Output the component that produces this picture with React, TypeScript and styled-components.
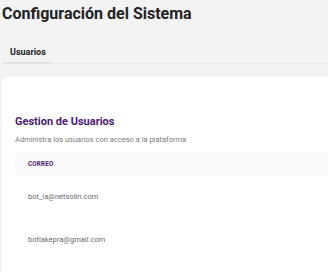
import React from 'react';
import styled, {createGlobalStyle} from 'styled-components';

const GlobalStyle = createGlobalStyle`
  html, body {
    margin: 0;
    padding: 0;
    background: #f3f3f4;
    font-family: Roboto, "Liberation Sans", sans-serif;
    overflow: hidden;
  }
`;

const Page = styled.div`
  width: 328px;
  height: 272px;
  padding: 4px 0 0 2px;
  box-sizing: border-box;
  overflow: hidden;
`;

const PageTitle = styled.h1`
  margin: 0;
  font-size: 16px;
  font-weight: 700;
  color: #222;
  line-height: 20px;
`;

const Tabs = styled.div`
  display: flex;
  margin-top: 20px;
  border-bottom: 1px solid #e9e9ee;
  margin-right: -2px;
`;

const Tab = styled.div<{active?: boolean}>`
  padding: 2px 8px 4px;
  font-size: 9px;
  font-weight: 700;
  line-height: 12px;
  color: #222;
  border-bottom: 2px solid ${p => (p.active ? '#e1e1ec' : 'transparent')};
  margin-bottom: -1px;
  width: 35px;
`;

const Card = styled.div`
  margin-top: 13px;
  margin-right: -20px;
  background: white;
  border-radius: 6px;
  padding: 38px 0 0 13px;
  height: 300px;
`;

const SectionTitle = styled.h2`
  margin: 0;
  font-size: 11px;
  font-weight: 700;
  color: #4b1a6e;
  line-height: 14px;
`;

const Subtitle = styled.p`
  margin: 6px 0 0;
  font-size: 7.5px;
  color: #7a7a7a;
  line-height: 10px;
`;

const Table = styled.div`
  margin-top: 8px;
`;

const HeaderRow = styled.div`
  display: flex;
  align-items: center;
  height: 22px;
  padding-left: 13px;
  background: #f8f9fb;
  font-size: 6.3px;
  font-weight: 700;
  color: #4b1a6e;
  letter-spacing: 0.2px;
`;

const Row = styled.div`
  display: flex;
  align-items: center;
  height: 43px;
  padding-left: 13px;
  font-size: 7.5px;
  color: #6a6a6a;
`;

const users = ['bot_ia@netsolin.com', 'botiakepra@gmail.com'];

export default function App() {
  return (
    <Page>
      <GlobalStyle />
      <PageTitle>Configuración del Sistema</PageTitle>
      <Tabs>
        <Tab active>Usuarios</Tab>
      </Tabs>
      <Card>
        <SectionTitle>Gestion de Usuarios</SectionTitle>
        <Subtitle>Administra los usuarios con acceso a la plataforma</Subtitle>
        <Table>
          <HeaderRow>CORREO</HeaderRow>
          {users.map(email => (
            <Row key={email}>{email}</Row>
          ))}
        </Table>
      </Card>
    </Page>
  );
}
